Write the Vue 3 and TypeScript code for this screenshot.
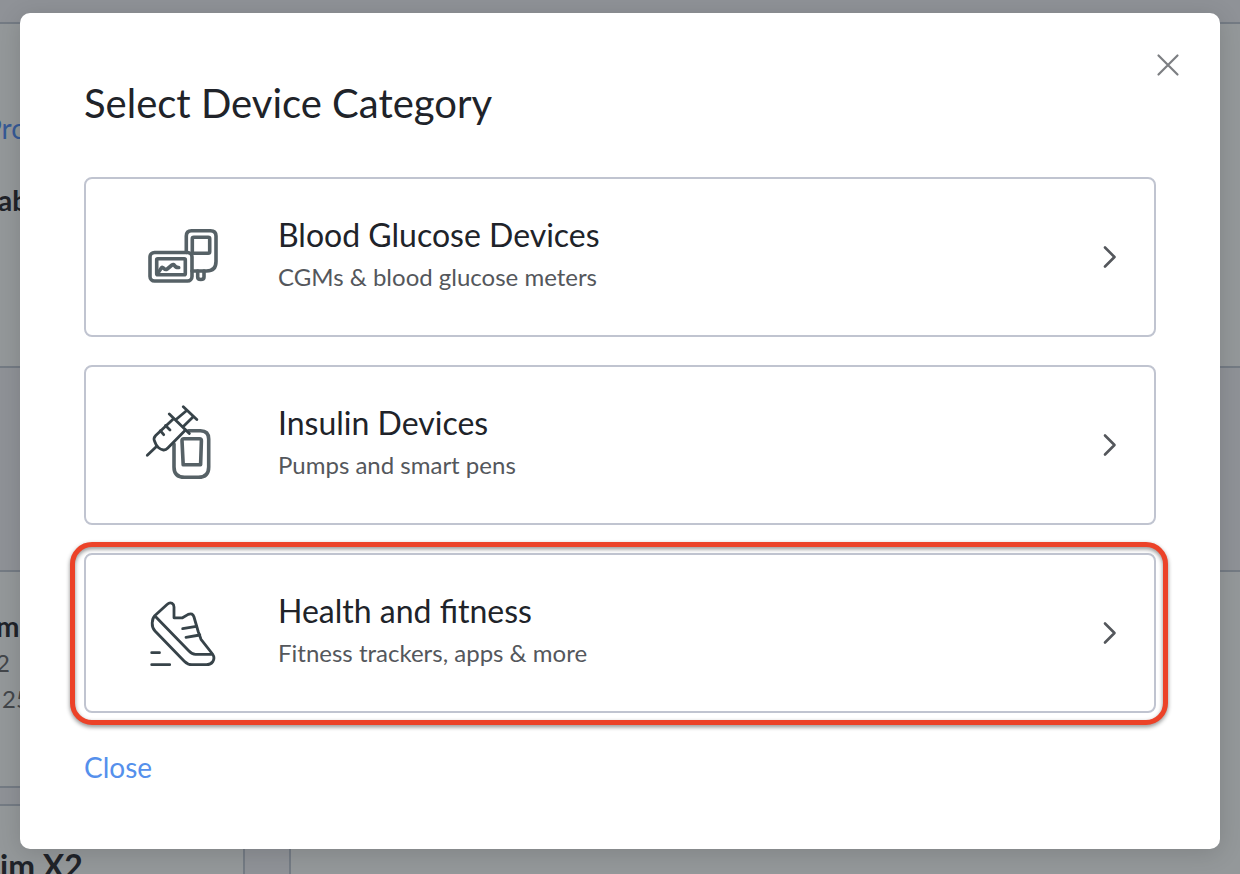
<script setup lang="ts">
type IconName = 'glucose' | 'insulin' | 'fitness'

interface Category {
  icon: IconName
  title: string
  detail: string
  highlighted: boolean
}

const categories: Category[] = [
  { icon: 'glucose', title: 'Blood Glucose Devices', detail: 'CGMs & blood glucose meters', highlighted: false },
  { icon: 'insulin', title: 'Insulin Devices', detail: 'Pumps and smart pens', highlighted: false },
  { icon: 'fitness', title: 'Health and fitness', detail: 'Fitness trackers, apps & more', highlighted: true },
]
</script>

<template>
  <div class="screen">
    <div class="page" aria-hidden="true">
      <section class="banner">
        <p class="crumb">Pro</p>
        <p class="heading">ab</p>
      </section>
      <div class="columns">
        <div class="side">
          <article class="panel first">
            <p class="heading">m</p>
            <p class="line">2</p>
            <p class="line indented">25</p>
          </article>
          <article class="panel second">
            <p class="heading">im X2</p>
          </article>
        </div>
        <div class="panel main"></div>
      </div>
    </div>

    <div class="overlay">
      <div class="dialog" role="dialog" aria-modal="true" aria-labelledby="dialog-title">
        <header class="header">
          <h1 id="dialog-title">Select Device Category</h1>
          <button class="dismiss" type="button" aria-label="Dismiss">
            <svg viewBox="0 0 24 24" width="24" height="24"><path d="M2.5 2.5 21.5 21.5M21.5 2.5 2.5 21.5" /></svg>
          </button>
        </header>

        <div class="list">
          <button
            v-for="item in categories"
            :key="item.title"
            type="button"
            class="card"
            :class="{ highlighted: item.highlighted }"
          >
            <svg v-if="item.icon === 'glucose'" class="icon soft" viewBox="0 0 80 80">
              <rect x="7" y="35.5" width="42" height="28.5" rx="4.5" />
              <rect x="13.7" y="41.7" width="28.6" height="16" rx="1" />
              <path d="M16 54.5 18.5 50.8Q19.5 49.8 20.7 51.2 22.5 53.2 24.2 52L29 48Q30.5 46.8 31.5 48.5 32.8 50.7 35.7 50.5" />
              <path d="M43.3 35.5V19Q43.3 13.7 48.5 13.7H67.5Q73 13.7 73 19V44.5Q73 54 63.5 54H49" />
              <rect x="49.3" y="20.3" width="17.4" height="16" rx="1.5" />
              <path d="M54.7 54V60Q54.7 62.5 57.8 62.5 61 62.5 61 60V54" />
            </svg>
            <svg v-else-if="item.icon === 'insulin'" class="icon" viewBox="0 0 80 80">
              <path class="soft" d="M45.5 25.7H57.5Q65.7 25.7 65.7 34V62Q65.7 72.3 55.5 72.3H41.5Q31 72.3 31 62V39" />
              <path class="soft" d="M41 33.7H56.5Q58.5 33.7 58.4 35.7L57.6 59.8H40.2L39 35.7Q38.9 33.7 41 33.7Z" />
              <path d="M4.3 50.3 13.5 41.5" />
              <path d="M30 14.3 12.7 30.5Q10 33.2 11.7 36.5 13 40.5 15.3 42.5 17.5 44.5 20.5 45 22.8 45.2 24.8 43L42.5 25" />
              <path d="M26.3 9 46.3 28.6M40.3 1.8 53.8 14.6M33 14.5 43.7 5.5M40.3 21.5 50.5 11.5" />
              <path d="M22.5 20.5 27 25M17.3 25.7 20.7 29.7" />
            </svg>
            <svg v-else class="icon" viewBox="0 0 80 80">
              <path d="M11.7 22.7 24.3 11.3Q26.7 9 29 10.3 31 11.4 31 14V24.8H39.5L45.2 21.4Q49.7 19.5 51 24L55.2 38.5 58 46.3 69.5 61Q72.2 65 69.8 68.6 67.7 71.7 63.5 71.7H49Q44.8 71.7 41.3 68.2L12 38Q9 34.7 9.2 30 9.3 25.3 11.7 22.7L45.7 57.7Q49 61.3 52.5 61.3H69.5" />
              <path d="M39.7 35.7 53.3 33.3M43 44.3 56.8 42M8.7 59.7H16.5M8.7 71.7H26.7" />
            </svg>
            <span class="text">
              <span class="title">{{ item.title }}</span>
              <span class="detail">{{ item.detail }}</span>
            </span>
            <svg class="chevron" viewBox="0 0 16 24" width="16" height="24"><path d="M3 2.5 12.5 12 3 21.5" /></svg>
          </button>
        </div>

        <button class="close" type="button">Close</button>
      </div>
    </div>
  </div>
</template>

<style>
body {
  margin: 0;
}
</style>

<style scoped>
.screen {
  position: relative;
  min-height: 100vh;
  overflow: hidden;
  background: #8f9297;
  color: #202329;
  font-family: Lato, "Liberation Sans", sans-serif;
}

.page {
  position: absolute;
  inset: 0;
  display: flex;
  flex-direction: column;
  padding-top: 22px;
}

.page p {
  margin: 0;
}

.banner {
  box-sizing: border-box;
  flex: none;
  height: 346px;
  padding-top: 86px;
  border-top: 2px solid #747b84;
  border-bottom: 2px solid #747b84;
  background: #94989a;
}

.crumb {
  font-size: 28px;
  line-height: 36px;
  color: #365a96;
  text-indent: -15px;
}

.heading {
  font-size: 28px;
  line-height: 36px;
  font-weight: 700;
}

.banner .heading {
  margin-top: 36px;
  text-indent: -2px;
}

.columns {
  flex: 1;
  display: flex;
  gap: 44px;
  margin-top: 202px;
}

.side {
  display: flex;
  flex-direction: column;
  gap: 16px;
  width: 245px;
}

.panel {
  box-sizing: border-box;
  border: 2px solid #747b84;
  border-left: 0;
  background: #94989a;
}

.first {
  flex: none;
  height: 218px;
  padding-top: 36px;
}

.first .heading {
  margin-bottom: 1px;
  text-indent: -4px;
}

.second {
  flex: 1;
  padding-top: 42px;
  border-bottom: 0;
}

.second .heading {
  font-size: 32px;
}

.line {
  font-size: 24px;
  line-height: 36px;
  color: #43464a;
  text-indent: -4px;
}

.line.indented {
  text-indent: 2px;
}

.main {
  flex: 1;
  border-left: 2px solid #747b84;
  border-right: 0;
  border-bottom: 0;
}

.overlay {
  position: relative;
  padding: 13px 20px 25px;
}

.dialog {
  padding-bottom: 64px;
  border-radius: 10px;
  background: #fff;
  box-shadow: 0 4px 24px rgba(0, 0, 0, 0.14);
}

.header {
  display: flex;
  align-items: flex-start;
  justify-content: space-between;
  padding: 40px 40px 0 64px;
}

h1 {
  margin: 26px 0 0;
  font-size: 40px;
  line-height: 48px;
  font-weight: 400;
}

button {
  padding: 0;
  border: 0;
  background: none;
  color: inherit;
  font-family: inherit;
  text-align: left;
  cursor: pointer;
}

svg {
  display: block;
  flex: none;
  fill: none;
  stroke-linecap: round;
  stroke-linejoin: round;
}

.dismiss svg {
  stroke: #7c7e82;
  stroke-width: 2.2;
}

.list {
  display: flex;
  flex-direction: column;
  gap: 28px;
  padding: 50px 64px 0;
}

.card {
  position: relative;
  display: flex;
  align-items: center;
  box-sizing: border-box;
  min-height: 160px;
  padding: 0 36px 0 57px;
  border: 2px solid #c0c4d0;
  border-radius: 8px;
}

.card.highlighted::after {
  content: "";
  position: absolute;
  inset: -13px -14px -14px -16px;
  border: 5px solid #ec4228;
  border-radius: 22px;
  filter: drop-shadow(0 2px 2px rgba(0, 0, 0, 0.45));
  pointer-events: none;
}

.icon {
  width: 80px;
  height: 80px;
  stroke: #374349;
  stroke-width: 2.8;
}

.soft {
  stroke: #566166;
  stroke-width: 3.6;
}

.text {
  display: flex;
  flex: 1;
  flex-direction: column;
  margin-left: 55px;
  padding-bottom: 4px;
}

.title {
  font-size: 32px;
  line-height: 44px;
}

.detail {
  font-size: 24px;
  line-height: 40px;
  color: #54575c;
}

.chevron {
  stroke: #54575c;
  stroke-width: 2.6;
}

.close {
  display: block;
  margin: 36px 64px 0;
  font-size: 28px;
  line-height: 36px;
  color: #5590ec;
}
</style>
